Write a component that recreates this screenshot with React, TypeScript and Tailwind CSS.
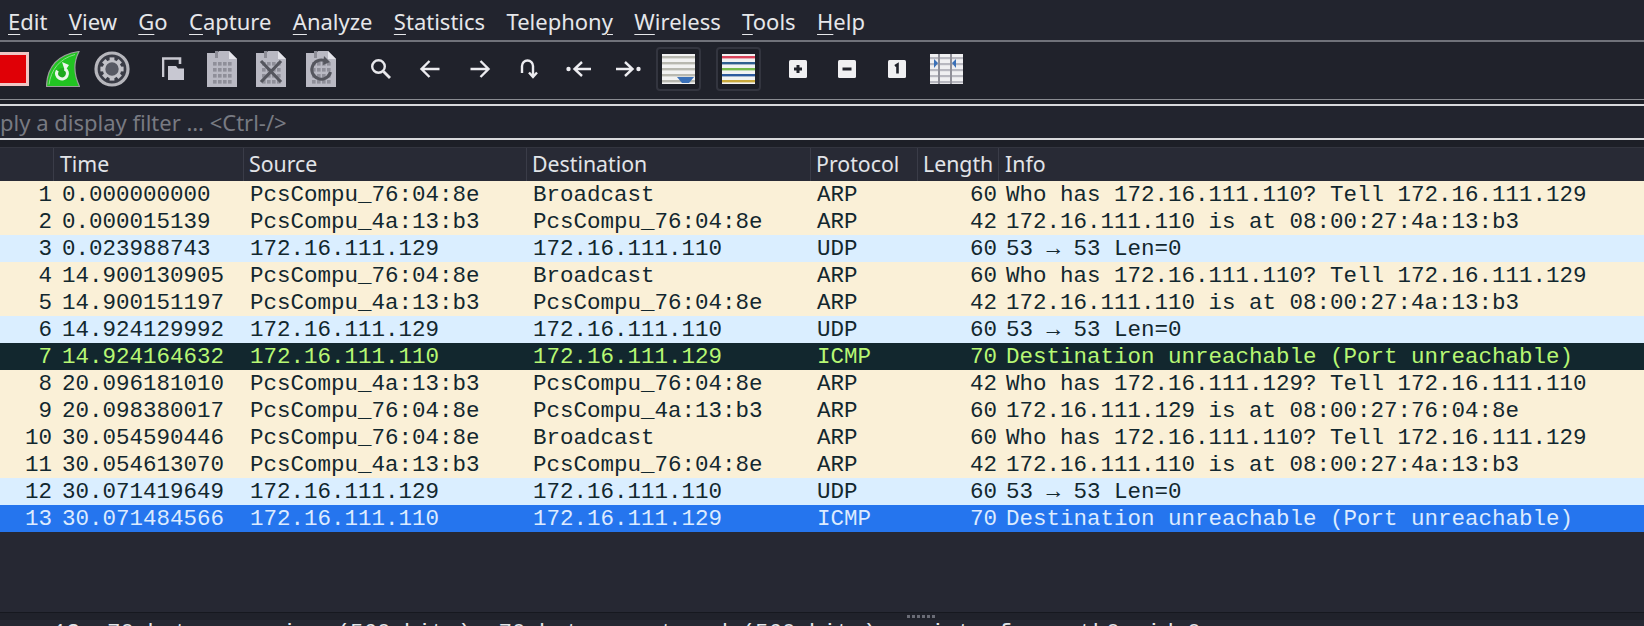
import React from "react";

const MENUS: [string, string, string][] = [
  ["", "E", "dit"],
  ["", "V", "iew"],
  ["", "G", "o"],
  ["", "C", "apture"],
  ["", "A", "nalyze"],
  ["", "S", "tatistics"],
  ["Telephon", "y", ""],
  ["", "W", "ireless"],
  ["", "T", "ools"],
  ["", "H", "elp"],
];

type Kind = "arp" | "udp" | "icmp" | "sel";
const ROWS: [string, string, string, string, string, string, string, Kind][] = [
  ["1", "0.000000000", "PcsCompu_76:04:8e", "Broadcast", "ARP", "60", "Who has 172.16.111.110? Tell 172.16.111.129", "arp"],
  ["2", "0.000015139", "PcsCompu_4a:13:b3", "PcsCompu_76:04:8e", "ARP", "42", "172.16.111.110 is at 08:00:27:4a:13:b3", "arp"],
  ["3", "0.023988743", "172.16.111.129", "172.16.111.110", "UDP", "60", "53 → 53 Len=0", "udp"],
  ["4", "14.900130905", "PcsCompu_76:04:8e", "Broadcast", "ARP", "60", "Who has 172.16.111.110? Tell 172.16.111.129", "arp"],
  ["5", "14.900151197", "PcsCompu_4a:13:b3", "PcsCompu_76:04:8e", "ARP", "42", "172.16.111.110 is at 08:00:27:4a:13:b3", "arp"],
  ["6", "14.924129992", "172.16.111.129", "172.16.111.110", "UDP", "60", "53 → 53 Len=0", "udp"],
  ["7", "14.924164632", "172.16.111.110", "172.16.111.129", "ICMP", "70", "Destination unreachable (Port unreachable)", "icmp"],
  ["8", "20.096181010", "PcsCompu_4a:13:b3", "PcsCompu_76:04:8e", "ARP", "42", "Who has 172.16.111.129? Tell 172.16.111.110", "arp"],
  ["9", "20.098380017", "PcsCompu_76:04:8e", "PcsCompu_4a:13:b3", "ARP", "60", "172.16.111.129 is at 08:00:27:76:04:8e", "arp"],
  ["10", "30.054590446", "PcsCompu_76:04:8e", "Broadcast", "ARP", "60", "Who has 172.16.111.110? Tell 172.16.111.129", "arp"],
  ["11", "30.054613070", "PcsCompu_4a:13:b3", "PcsCompu_76:04:8e", "ARP", "42", "172.16.111.110 is at 08:00:27:4a:13:b3", "arp"],
  ["12", "30.071419649", "172.16.111.129", "172.16.111.110", "UDP", "60", "53 → 53 Len=0", "udp"],
  ["13", "30.071484566", "172.16.111.110", "172.16.111.129", "ICMP", "70", "Destination unreachable (Port unreachable)", "sel"],
];

const ROW_STYLE: Record<Kind, string> = {
  arp: "bg-[#faf0d7] text-[#12272e]",
  udp: "bg-[#daeeff] text-[#12272e]",
  icmp: "bg-[#12272e] text-[#b7f774]",
  sel: "bg-[#2575ee] text-[#dcebff]",
};

function RedStop() {
  return (
    <svg width="29" height="34" viewBox="0 0 29 34" className="shrink-0">
      <rect x="-6" y="0" width="35" height="34" fill="#f0c6c4" />
      <rect x="-6" y="3" width="32" height="28" fill="#e00006" />
    </svg>
  );
}

function Fin() {
  return (
    <svg width="34" height="36" viewBox="0 0 34 36" className="ml-[17px] shrink-0">
      <path d="M0.5 35.5 C1 18 10 4 33 0.5 C27 12 28 24 33.5 35.5 Z" fill="#22c422" stroke="#9aa09a" strokeWidth="1.2" />
      <path d="M3 33.5 C5 19 13 8 29 3.5" fill="none" stroke="#8ade8a" strokeWidth="1" />
      <circle cx="16" cy="22.5" r="5.4" fill="#1fa81f" stroke="#eaf6ea" strokeWidth="3.2" strokeDasharray="25 9" transform="rotate(-60 16 22.5)" />
      <path d="M16 11 L23 14 L19 20 Z" fill="#eaf6ea" />
    </svg>
  );
}

function Gear() {
  const teeth = Array.from({ length: 8 }, (_, i) => i * 45);
  return (
    <svg width="36" height="36" viewBox="0 0 36 36" className="ml-[14px] shrink-0">
      <circle cx="18" cy="18" r="16" fill="#3a3c46" stroke="#b6b6bc" strokeWidth="3.2" />
      {teeth.map((a) => (
        <rect key={a} x="15.6" y="6.4" width="4.8" height="5" fill="#c2c2c8" transform={`rotate(${a} 18 18)`} />
      ))}
      <circle cx="18" cy="18" r="8" fill="#585a64" stroke="#c2c2c8" strokeWidth="2.6" />
    </svg>
  );
}

function CopyOpen() {
  return (
    <svg width="22" height="24" viewBox="0 0 22 24" className="ml-[32px] shrink-0">
      <path d="M1 20 V1.5 H18 V7" fill="none" stroke="#c8c8d0" strokeWidth="2.6" />
      <path d="M6 23 V9 H14 L16 11.5 H22 V23 Z" fill="#c8c8d2" />
    </svg>
  );
}

function FileBase({ children, ml }: { children?: React.ReactNode; ml: string }) {
  return (
    <svg width="30" height="36" viewBox="0 0 30 36" className={`${ml} shrink-0`}>
      <path d="M0 2 H10 L12 0 H22 L30 8 V36 H0 Z" fill="#b9b9c3" />
      <path d="M22 0 V8 H30 Z" fill="#e4e4ea" />
      <rect x="8" y="0" width="3" height="7" fill="#8d8d97" />
      {[11, 17, 23, 29].map((y) =>
        [6, 11, 16, 21].map((x) => <rect key={`${x}-${y}`} x={x} y={y} width="3.6" height="3.6" fill="#8f8f99" />)
      )}
      {children}
    </svg>
  );
}

function Search() {
  return (
    <svg width="22" height="22" viewBox="0 0 22 22" className="ml-[34px] shrink-0">
      <circle cx="8.5" cy="8.5" r="6.3" fill="none" stroke="#e8e8ec" strokeWidth="2.4" />
      <path d="M13.5 13.5 L20 20" stroke="#e8e8ec" strokeWidth="2.8" />
    </svg>
  );
}

function Nav({ d, w, ml, dots }: { d: string; w: number; ml: string; dots?: [number, number] }) {
  return (
    <svg width={w} height="20" viewBox={`0 0 ${w} 20`} className={`${ml} shrink-0`}>
      <path d={d} fill="none" stroke="#ececf0" strokeWidth="2.4" />
      {dots && <circle cx={dots[0]} cy={dots[1]} r="2.2" fill="#ececf0" />}
    </svg>
  );
}

function Lines({ colors, children, ml }: { colors: string[]; children?: React.ReactNode; ml: string }) {
  return (
    <div className={`${ml} flex h-[44px] w-[45px] shrink-0 items-center justify-center rounded-[4px] border-2 border-[#33353f] bg-[#1d1f27]`}>
      <svg width="33" height="30" viewBox="0 0 33 30">
        <rect width="33" height="30" fill="#f2f2f2" />
        {colors.map((c, i) => (
          <rect key={i} x="0" y={2 + i * 6} width="33" height="2.4" fill={c} />
        ))}
        {children}
      </svg>
    </div>
  );
}

function Square({ ml, children }: { ml: string; children: React.ReactNode }) {
  return (
    <svg width="18" height="18" viewBox="0 0 18 18" className={`${ml} shrink-0`}>
      <rect width="18" height="18" rx="1.5" fill="#f0f0f2" />
      {children}
    </svg>
  );
}

function Toolbar() {
  return (
    <div className="flex h-[57px] items-center bg-[#20222b] pb-[3px]">
      <RedStop />
      <Fin />
      <Gear />
      <CopyOpen />
      <FileBase ml="ml-[23px]" />
      <FileBase ml="ml-[19px]">
        <path d="M5 10 L25 31 M25 10 L5 31" stroke="#55565e" strokeWidth="3.2" />
      </FileBase>
      <FileBase ml="ml-[20px]">
        <path d="M21 11 A9.5 9.5 0 1 0 24.5 21" fill="none" stroke="#55565e" strokeWidth="3" />
        <path d="M18 5 L24 11 L17 14 Z" fill="#55565e" />
      </FileBase>
      <Search />
      <Nav ml="ml-[27px]" w={21} d="M20.5 10 H3 M10.5 2 L2.5 10 L10.5 18" />
      <Nav ml="ml-[30px]" w={21} d="M0.5 10 H18 M10.5 2 L18.5 10 L10.5 18" />
      <Nav ml="ml-[28px]" w={20} d="M3 14 V7 A5.5 5.5 0 0 1 14 7 V17 M10 13.5 L14 18 L18 13.5" />
      <Nav ml="ml-[27px]" w={26} d="M25 10 H10 M16 3 L8.5 10 L16 17" dots={[2.5, 10]} />
      <Nav ml="ml-[23px]" w={26} d="M1 10 H16 M10 3 L17.5 10 L10 17" dots={[23.5, 10]} />
      <Lines ml="ml-[15px]" colors={["#b8b8b0", "#b8b8b0", "#b8b8b0", "#b8b8b0", "#b8b8b0"]}>
        <path d="M15 23 H32 L27 29 H20 Z" fill="#3a70b8" />
      </Lines>
      <Lines ml="ml-[15px]" colors={["#d9435a", "#2f5f8f", "#74b84a", "#2d5a9e", "#c8a83c"]} />
      <Square ml="ml-[28px]">
        <path d="M9 5 V13 M5 9 H13" stroke="#20222b" strokeWidth="3" />
      </Square>
      <Square ml="ml-[31px]">
        <path d="M4.5 9 H13.5" stroke="#20222b" strokeWidth="3" />
      </Square>
      <Square ml="ml-[32px]">
        <path d="M7 6 L9.5 4.5 V13.5" fill="none" stroke="#20222b" strokeWidth="2.6" />
      </Square>
      <svg width="33" height="30" viewBox="0 0 33 30" className="ml-[24px] shrink-0">
        <rect width="33" height="30" fill="#f0f0f2" />
        {[4, 10, 16, 22, 28].map((y) => (
          <rect key={y} x="0" y={y - 1} width="33" height="2.2" fill="#b8b8c0" />
        ))}
        <rect x="8" y="0" width="2" height="30" fill="#8f8f98" />
        <rect x="20" y="0" width="2" height="30" fill="#8f8f98" />
        <path d="M4 5 L8 9 L4 14 Z M26 5 L22 9 L26 14 Z" fill="#3a70b8" />
      </svg>
    </div>
  );
}

const COLS = ["w-[54px]", "w-[190px]", "w-[283px]", "w-[284px]", "w-[107px]", "w-[81px]"];

function HeaderCell({ w, pl, children }: { w: string; pl: string; children?: React.ReactNode }) {
  return <div className={`${w} ${pl} h-full shrink-0 border-r border-[#3a3c48]`}>{children}</div>;
}

export default function App() {
  return (
    <div className="h-[626px] w-[1644px] overflow-hidden bg-[#262833] font-['Noto_Sans',sans-serif]">
      <div className="flex h-[40px] items-center gap-[21.4px] bg-[#22242e] pl-[8px] pt-[2px] text-[22px] leading-none text-[#e6e7ea]">
        {MENUS.map(([a, u, b]) => (
          <span key={a + u + b} className="whitespace-pre">
            {a}
            <span className="underline decoration-1 underline-offset-[4px]">{u}</span>
            {b}
          </span>
        ))}
      </div>
      <div className="h-[2px] bg-[#70727a]" />
      <Toolbar />
      <div className="h-[1px] bg-[#8a8c92]" />
      <div className="h-[4px] bg-[#1d1f27]" />
      <div className="h-[2px] bg-[#d8d9dc]" />
      <div className="flex h-[32px] items-center bg-[#22242e] text-[22px] leading-none text-[#787a82]">
        ply a display filter … &lt;Ctrl-/&gt;
      </div>
      <div className="h-[2px] bg-[#d8d9dc]" />
      <div className="h-[7px] bg-[#1d1f27]" />
      <div className="flex h-[34px] border-t border-[#33353f] bg-[#282a35] text-[21.3px] leading-[32px] text-[#e2e4e8]">
        <HeaderCell w={COLS[0]} pl="" />
        <HeaderCell w={COLS[1]} pl="pl-[6px]">Time</HeaderCell>
        <HeaderCell w={COLS[2]} pl="pl-[5px]">Source</HeaderCell>
        <HeaderCell w={COLS[3]} pl="pl-[5px]">Destination</HeaderCell>
        <HeaderCell w={COLS[4]} pl="pl-[5px]">Protocol</HeaderCell>
        <HeaderCell w={COLS[5]} pl="pl-[5px]">Length</HeaderCell>
        <div className="pl-[6px]">Info</div>
      </div>
      <div className="font-['Liberation_Mono',monospace] text-[22.5px] leading-[29px]">
        {ROWS.map(([no, time, src, dst, proto, len, info, kind]) => (
          <div key={no} className={`flex h-[27px] whitespace-pre ${ROW_STYLE[kind]}`}>
            <div className={`${COLS[0]} shrink-0 pr-[2px] text-right`}>{no}</div>
            <div className={`${COLS[1]} shrink-0 pl-[8px]`}>{time}</div>
            <div className={`${COLS[2]} shrink-0 pl-[6px]`}>{src}</div>
            <div className={`${COLS[3]} shrink-0 pl-[6px]`}>{dst}</div>
            <div className={`${COLS[4]} shrink-0 pl-[6px]`}>{proto}</div>
            <div className={`${COLS[5]} shrink-0 pr-[2px] text-right`}>{len}</div>
            <div className="pl-[7px]">{info}</div>
          </div>
        ))}
      </div>
      <div className="h-[80px]" />
      <div className="h-[1px] bg-[#16181f]" />
      <div className="flex h-[7px] items-center gap-[2px] bg-[#20222b] pl-[907px]">
        {[0, 1, 2, 3, 4, 5].map((i) => (
          <span key={i} className="h-[3px] w-[3px] bg-[#6a6c76]" />
        ))}
      </div>
      <div className="bg-[#262833] pl-[53px] pt-[3px] font-['Liberation_Mono',monospace] text-[22.5px] leading-[20px] whitespace-pre text-[#e4e6ea]">
        13: 70 bytes on wire (560 bits), 70 bytes captured (560 bits) on interface eth0, id 0
      </div>
    </div>
  );
}
